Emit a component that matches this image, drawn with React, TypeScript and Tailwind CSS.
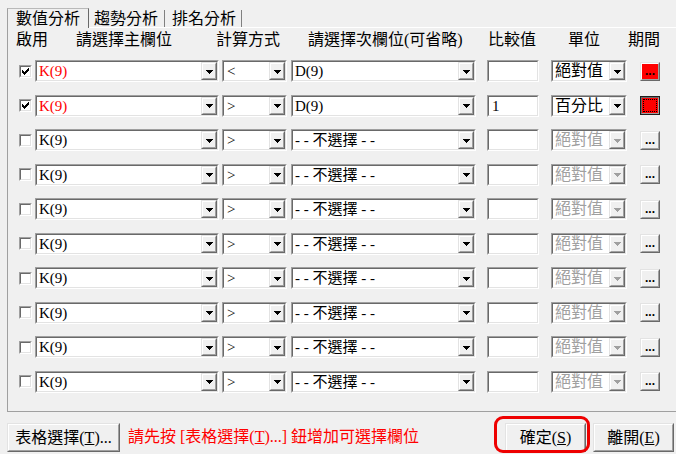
import React from "react";

type Row = {
  checked: boolean;
  red: boolean;
  op: string;
  sec: string;
  val: string;
  unit: string;
  enabled: boolean;
  period: "red" | "focus" | "gray";
};

const rows: Row[] = [
  { checked: true, red: true, op: "<", sec: "D(9)", val: "", unit: "絕對值", enabled: true, period: "red" },
  { checked: true, red: true, op: ">", sec: "D(9)", val: "1", unit: "百分比", enabled: true, period: "focus" },
  ...Array.from({ length: 8 }, () => ({
    checked: false,
    red: false,
    op: ">",
    sec: "- - 不選擇 - -",
    val: "",
    unit: "絕對值",
    enabled: false,
    period: "gray" as const,
  })),
];

function Sunken({ className = "", children }: { className?: string; children?: React.ReactNode }) {
  return (
    <div className={`border border-t-[#a0a0a0] border-l-[#a0a0a0] border-r-white border-b-white ${className}`}>
      <div className="h-full flex items-center bg-white border border-t-[#696969] border-l-[#696969] border-r-[#e3e3e3] border-b-[#e3e3e3]">
        {children}
      </div>
    </div>
  );
}

function Arrow({ disabled }: { disabled?: boolean }) {
  return (
    <svg width="7" height="4" viewBox="0 0 7 4" className="mt-[1px]">
      <path
        d="M0 0h7v1H0z M1 1h5v1H1z M2 2h3v1H2z M3 3h1v1H3z"
        fill={disabled ? "#a0a0a0" : "#000"}
      />
    </svg>
  );
}

function DropButton({ disabled }: { disabled?: boolean }) {
  return (
    <div className="w-[16px] h-full border border-t-[#e3e3e3] border-l-[#e3e3e3] border-r-[#696969] border-b-[#696969]">
      <div className="h-full flex items-center justify-center bg-[#f0f0f0] border border-t-white border-l-white border-r-[#a0a0a0] border-b-[#a0a0a0]">
        <Arrow disabled={disabled} />
      </div>
    </div>
  );
}

function Combo({
  className,
  text,
  textClass = "",
  disabled,
}: {
  className: string;
  text: string;
  textClass?: string;
  disabled?: boolean;
}) {
  return (
    <Sunken className={`h-[22px] ${className}`}>
      <span className={`flex-1 pl-[2px] text-[15px] leading-[18px] whitespace-nowrap overflow-hidden ${textClass}`}>
        {text}
      </span>
      <DropButton disabled={disabled} />
    </Sunken>
  );
}

function CheckBox({ checked }: { checked: boolean }) {
  return (
    <div className="w-[13px] h-[13px] border border-t-[#a0a0a0] border-l-[#a0a0a0] border-r-white border-b-white">
      <div className="h-full flex items-center justify-center bg-white border border-t-[#696969] border-l-[#696969] border-r-[#e3e3e3] border-b-[#e3e3e3]">
        {checked && (
          <svg width="7" height="7" viewBox="0 0 7 7">
            <path
              d="M6 0h1v1H6z M5 1h2v1H5z M0 2h1v1H0z M4 2h3v1H4z M0 3h2v1H0z M3 3h3v1H3z M0 4h5v1H0z M1 5h3v1H1z M2 6h1v1H2z"
              fill="#000"
            />
          </svg>
        )}
      </div>
    </div>
  );
}

function Dots() {
  return (
    <span className="font-['Liberation_Sans',sans-serif] font-bold text-[12px] leading-[12px] text-black">...</span>
  );
}

function PeriodButton({ kind }: { kind: Row["period"] }) {
  if (kind === "focus") {
    return (
      <div className="ml-[13px] w-[20px] h-[19px] border border-[#1e1e1e]">
        <div className="h-full border border-t-[#696969] border-l-[#696969] border-r-[#a0a0a0] border-b-[#a0a0a0] bg-[#ff0000] p-[1px]">
          <div className="h-full border border-dotted border-black" />
        </div>
      </div>
    );
  }
  const bg = kind === "red" ? "bg-[#ff0000]" : "bg-[#f0f0f0]";
  return (
    <div className="ml-[13px] w-[20px] h-[19px] border border-t-[#e3e3e3] border-l-[#e3e3e3] border-r-[#696969] border-b-[#696969]">
      <div
        className={`h-full flex items-end justify-center pb-[2px] border border-t-white border-l-white border-r-[#a0a0a0] border-b-[#a0a0a0] ${bg}`}
      >
        <Dots />
      </div>
    </div>
  );
}

function Button({ className, children }: { className: string; children: React.ReactNode }) {
  return (
    <div className={`h-[29px] border border-t-[#e3e3e3] border-l-[#e3e3e3] border-r-[#696969] border-b-[#696969] ${className}`}>
      <div className="h-full flex items-center justify-center bg-[#f0f0f0] border border-t-white border-l-white border-r-[#a0a0a0] border-b-[#a0a0a0] text-[16px] leading-[18px] whitespace-nowrap">
        {children}
      </div>
    </div>
  );
}

export default function App() {
  return (
    <div className="relative w-[676px] h-[454px] overflow-hidden bg-[#f0f0f0] text-black font-['Liberation_Serif','Noto_Sans_CJK_TC',serif]">
      {/* tabs */}
      <div className="h-[27px] flex items-start pl-[7px] pt-[8px] text-[16px] leading-[18px]">
        <div className="relative z-10 h-[20px] w-[82px] flex items-center pl-[8px] bg-[#f0f0f0] border-t border-l border-r border-t-[#b9b9b9] border-l-[#a0a0a0] border-r-[#696969]">
          數值分析
        </div>
        <div className="mt-[2px] h-[17px] flex items-center pl-[5px] pr-[6px] border-r border-r-[#808080]">趨勢分析</div>
        <div className="mt-[2px] h-[17px] flex items-center pl-[7px] pr-[5px] border-r border-r-[#808080]">排名分析</div>
      </div>

      {/* panel */}
      <div className="ml-[7px] h-[385px] flex flex-col border-l border-t border-b border-l-[#a0a0a0] border-t-white border-b-[#a0a0a0]">
        <div className="mt-[4px] h-[16px] flex items-center pl-[8px] text-[16px] leading-[16px] whitespace-nowrap">
          <span className="w-[60px]">啟用</span>
          <span className="w-[140px]">請選擇主欄位</span>
          <span className="w-[92px]">計算方式</span>
          <span className="w-[180px]">請選擇次欄位(可省略)</span>
          <span className="w-[80px]">比較值</span>
          <span className="w-[60px]">單位</span>
          <span>期間</span>
        </div>

        <div className="mt-[12px] flex flex-col gap-[12.5px]">
          {rows.map((r, i) => (
            <div key={i} className="h-[22px] flex items-center pl-[11px]">
              <CheckBox checked={r.checked} />
              <Combo
                className="ml-[3px] w-[184px]"
                text="K(9)"
                textClass={r.red ? "text-[#ff0000]" : "text-black"}
              />
              <Combo className="ml-[3px] w-[65px]" text={r.op} textClass="pl-[3px]" />
              <Combo className="ml-[4px] w-[185px]" text={r.sec} />
              <Sunken className="ml-[11px] w-[52px] h-[22px]">
                <span className="pl-[3px] text-[15px] leading-[18px]">{r.val}</span>
              </Sunken>
              <Combo
                className="ml-[12px] w-[76px]"
                text={r.unit}
                textClass={r.enabled ? "text-black text-[16px]" : "text-[#a0a0a0] text-[16px]"}
                disabled={!r.enabled}
              />
              <PeriodButton kind={r.period} />
            </div>
          ))}
        </div>
      </div>

      {/* bottom bar */}
      <div className="flex items-start pt-[11px] pr-[2px]">
        <Button className="ml-[7px] w-[113px]">
          表格選擇(<u>T</u>)...
        </Button>
        <span className="ml-[8px] mt-[5px] text-[16px] leading-[18px] text-[#ff0000] whitespace-nowrap">
          請先按 [表格選擇(<u>T</u>)...] 鈕增加可選擇欄位
        </span>
        <Button className="ml-auto w-[81px]">
          確定(<u>S</u>)
        </Button>
        <Button className="ml-[7px] w-[81px]">
          離開(<u>E</u>)
        </Button>
      </div>

      {/* highlight ring */}
      <div className="absolute left-[494px] top-[416px] w-[96px] h-[37px] rounded-[9px] border-[3px] border-[#ee0000]" />
    </div>
  );
}
